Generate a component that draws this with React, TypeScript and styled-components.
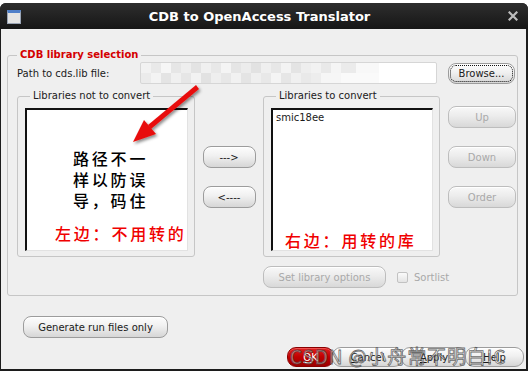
import styled, { createGlobalStyle } from "styled-components";

const GlobalStyle = createGlobalStyle`
  html, body {
    margin: 0;
    padding: 0;
    background: #ffffff;
  }
  body {
    font-family: "DejaVu Sans", "Noto Sans", sans-serif;
    font-size: 10px;
    color: #1a1a1a;
  }
`;

const Screen = styled.div`
  position: relative;
  width: 531px;
  height: 372px;
  overflow: hidden;
  padding-top: 3px;
  box-sizing: border-box;
`;

const Window = styled.div`
  width: 528px;
  height: 368px;
  display: flex;
  flex-direction: column;
  background: #1c1c1c;
  border-radius: 6px 6px 0 0;
  padding: 0 2px 2px 1px;
  box-sizing: border-box;
`;

const TitleBar = styled.div`
  height: 26px;
  display: flex;
  align-items: center;
  padding: 0 10px 0 7px;
  background: linear-gradient(#2e2e2e, #161616);
  border-radius: 6px 6px 0 0;
  margin: 0 -2px 0 -1px;
`;

const WinIcon = styled.div`
  width: 12px;
  height: 10px;
  border: 1px solid #9aa4b4;
  border-top: 3px solid #4f7fc9;
  background: #e4e4e4;
  margin-top: 2px;
`;

const Title = styled.div`
  flex: 1;
  text-align: center;
  color: #ffffff;
  font-family: "DejaVu Sans", sans-serif;
  font-weight: bold;
  font-size: 13px;
  padding-right: 10px;
`;

const Body = styled.div`
  flex: 1;
  background: #efefef;
  display: flex;
  flex-direction: column;
  padding: 20px 8px 0 6px;
  position: relative;
`;

const Group = styled.fieldset`
  margin: 0;
  padding: 0 0 7px 9px;
  border: 1px solid #c6c6c6;
  border-radius: 3px;
  min-inline-size: 0;
`;

const Legend = styled.legend<{ $accent?: boolean }>`
  padding: 0 3px;
  margin-left: ${(p) => (p.$accent ? "0" : "5px")};
  font-size: 10px;
  line-height: 12px;
  font-weight: ${(p) => (p.$accent ? "bold" : "normal")};
  color: ${(p) => (p.$accent ? "#d40000" : "#202020")};
`;

const PathRow = styled.div`
  display: flex;
  align-items: center;
  height: 22px;
  margin-top: 1px;
`;

const PathLabel = styled.span`
  width: 123px;
  flex-shrink: 0;
`;

const PathInput = styled.div`
  width: 297px;
  height: 22px;
  flex-shrink: 0;
  box-sizing: border-box;
  border: 1px solid #d6d6d6;
  border-radius: 2px;
  background-color: #ffffff;
  background-image:
    linear-gradient(90deg, #f2f2f2 0 10px, #e9e9e9 10px 20px, #f6f6f6 20px 30px, #e6e6e6 30px 40px, #eeeeee 40px 50px, #e3e3e3 50px 60px, #f0f0f0 60px 70px, #e8e8e8 70px 80px, #f4f4f4 80px 90px, #e5e5e5 90px 100px, #ececec 100px 110px, #e2e2e2 110px 120px, #efefef 120px 130px, #e7e7e7 130px 140px, #f3f3f3 140px 150px, #e4e4e4 150px 160px, #eeeeee 160px 170px, #f2f2f2 170px 180px, #e9e9e9 180px 190px, #f5f5f5 190px 200px, #ebebeb 200px 215px, #f8f8f8 215px 238px, transparent 238px),
    linear-gradient(90deg, #ebebeb 0 10px, #f3f3f3 10px 20px, #e4e4e4 20px 30px, #f0f0f0 30px 40px, #e6e6e6 40px 50px, #f2f2f2 50px 60px, #e2e2e2 60px 70px, #eeeeee 70px 80px, #e7e7e7 80px 90px, #f1f1f1 90px 100px, #e4e4e4 100px 110px, #efefef 110px 120px, #e8e8e8 120px 130px, #f4f4f4 130px 140px, #e6e6e6 140px 150px, #f0f0f0 150px 160px, #e9e9e9 160px 170px, #ededed 170px 180px, #f6f6f6 180px 200px, #fafafa 200px 238px, transparent 238px);
  background-size: 100% 50%, 100% 50%;
  background-position: 0 0, 0 100%;
  background-repeat: no-repeat;
`;

const Button = styled.button<{ $w: number; $h?: number; $focus?: boolean }>`
  width: ${(p) => p.$w}px;
  height: ${(p) => p.$h ?? 22}px;
  flex-shrink: 0;
  padding: 0;
  box-sizing: border-box;
  font-family: "DejaVu Sans", sans-serif;
  font-size: 10px;
  color: #1a1a1a;
  border: 1px solid #9c9c9c;
  border-radius: 8px;
  background: linear-gradient(#fdfdfd, #f0f0f0 45%, #d6d6d6);
  box-shadow: inset 0 1px 0 #ffffff;
  outline: ${(p) => (p.$focus ? "1px dotted #111" : "none")};
  outline-offset: -3px;
  &:disabled {
    color: #a9a9a9;
    border-color: #bdbdbd;
    background: linear-gradient(#f8f8f8, #ececec 45%, #d8d8d8);
  }
`;

const BrowseButton = styled(Button)`
  margin-left: 11px;
`;

const MainRow = styled.div`
  display: flex;
  align-items: flex-start;
  margin-top: 6px;
`;

const ListGroup = styled.fieldset<{ $w: number }>`
  width: ${(p) => p.$w}px;
  flex-shrink: 0;
  box-sizing: border-box;
  margin: 0;
  padding: 6px 6px 5px 7px;
  border: 1px solid #c6c6c6;
  border-radius: 3px;
  min-inline-size: 0;
`;

const ListBox = styled.div<{ $align: "center" | "start" }>`
  height: 143px;
  box-sizing: border-box;
  background: #ffffff;
  border-top: 2px solid #111;
  border-left: 2px solid #111;
  border-right: 1px solid #e2e2e2;
  border-bottom: 1px solid #e2e2e2;
  display: flex;
  flex-direction: column;
  padding: ${(p) => (p.$align === "center" ? "38px 0 0 28px" : "2px 0 0 3px")};
`;

const ListItem = styled.div`
  font-size: 10px;
  line-height: 12px;
`;

const NoteLines = styled.div`
  padding-left: 18px;
  font-family: "Noto Sans CJK SC", sans-serif;
  font-weight: 500;
  font-size: 16px;
  line-height: 21px;
  letter-spacing: 2.8px;
  color: #000;
`;

const RedNote = styled.div<{ $top: number; $indent?: number }>`
  margin-top: ${(p) => p.$top}px;
  padding-left: ${(p) => p.$indent ?? 0}px;
  font-family: "Noto Sans CJK SC", sans-serif;
  font-weight: 500;
  font-size: 16px;
  line-height: 18px;
  letter-spacing: 2.8px;
  color: #f00000;
  white-space: nowrap;
`;

const MoveColumn = styled.div`
  width: 68px;
  flex-shrink: 0;
  display: flex;
  flex-direction: column;
  align-items: center;
  gap: 18px;
  padding-top: 56px;
`;

const SideColumn = styled.div`
  display: flex;
  flex-direction: column;
  gap: 18px;
  margin-left: 8px;
  padding-top: 16px;
`;

const OptionRow = styled.div`
  display: flex;
  align-items: center;
  margin-top: 9px;
  margin-left: 246px;
`;

const CheckLabel = styled.label`
  display: flex;
  align-items: center;
  margin-left: 11px;
  color: #a9a9a9;
  gap: 6px;
`;

const CheckBox = styled.span`
  width: 11px;
  height: 11px;
  box-sizing: border-box;
  border: 1px solid #c2c2c2;
  border-radius: 2px;
  background: linear-gradient(#fafafa, #e4e4e4);
`;

const GenerateRow = styled.div`
  margin-top: 20px;
  padding-left: 16px;
`;

const FooterRow = styled.div`
  display: flex;
  justify-content: flex-end;
  margin-top: 9px;
  margin-right: -6px;
`;

const FooterButton = styled(Button)<{ $primary?: boolean }>`
  height: 20px;
  margin-left: -2px;
  border-radius: 9px;
  ${(p) =>
    p.$primary &&
    `
    color: #ffffff;
    border-color: #8a0000;
    background: linear-gradient(#e02020, #c00000 50%, #9c0000);
    box-shadow: inset 0 1px 0 #f05050;
  `}
  u {
    text-decoration: underline;
  }
`;

const Overlay = styled.svg`
  position: absolute;
  left: 0;
  top: 0;
  pointer-events: none;
`;

const Watermark = styled.div`
  position: absolute;
  left: 290px;
  top: 344px;
  font-family: "Noto Sans CJK SC", "DejaVu Sans", sans-serif;
  font-size: 19px;
  line-height: 24px;
  letter-spacing: 0.9px;
  color: rgba(255, 255, 255, 0.45);
  -webkit-text-stroke: 0.8px rgba(70, 70, 70, 0.8);
  white-space: nowrap;
  pointer-events: none;
`;

const CloseIcon = () => (
  <svg width="10" height="10" viewBox="0 0 10 10">
    <path d="M1.5 1.5 L8.5 8.5 M8.5 1.5 L1.5 8.5" stroke="#bdbdbd" strokeWidth="2.2" strokeLinecap="square" />
  </svg>
);

export default function App() {
  return (
    <>
      <GlobalStyle />
      <Screen>
        <Window>
          <TitleBar>
            <WinIcon />
            <Title>CDB to OpenAccess Translator</Title>
            <CloseIcon />
          </TitleBar>
          <Body>
            <Group>
              <Legend $accent>CDB library selection</Legend>
              <PathRow>
                <PathLabel>Path to cds.lib file:</PathLabel>
                <PathInput />
                <BrowseButton $w={67} $h={21} $focus>
                  Browse...
                </BrowseButton>
              </PathRow>
              <MainRow>
                <ListGroup $w={178}>
                  <Legend>Libraries not to convert</Legend>
                  <ListBox $align="center">
                    <NoteLines>
                      <div>路径不一</div>
                      <div>样以防误</div>
                      <div>导，码住</div>
                    </NoteLines>
                    <RedNote $top={13}>左边：不用转的</RedNote>
                  </ListBox>
                </ListGroup>
                <MoveColumn>
                  <Button $w={53}>---&gt;</Button>
                  <Button $w={53}>&lt;----</Button>
                </MoveColumn>
                <ListGroup $w={177}>
                  <Legend>Libraries to convert</Legend>
                  <ListBox $align="start">
                    <ListItem>smic18ee</ListItem>
                    <RedNote $top={107} $indent={9}>
                      右边：用转的库
                    </RedNote>
                  </ListBox>
                </ListGroup>
                <SideColumn>
                  <Button $w={68} disabled>
                    Up
                  </Button>
                  <Button $w={68} disabled>
                    Down
                  </Button>
                  <Button $w={68} disabled>
                    Order
                  </Button>
                </SideColumn>
              </MainRow>
              <OptionRow>
                <Button $w={123} disabled>
                  Set library options
                </Button>
                <CheckLabel>
                  <CheckBox />
                  Sortlist
                </CheckLabel>
              </OptionRow>
            </Group>
            <GenerateRow>
              <Button $w={145}>Generate run files only</Button>
            </GenerateRow>
            <FooterRow>
              <FooterButton $w={47} $primary>
                <u>O</u>K
              </FooterButton>
              <FooterButton $w={71}>
                <u>C</u>ancel
              </FooterButton>
              <FooterButton $w={66}>
                <u>A</u>pply
              </FooterButton>
              <FooterButton $w={59}>
                <u>H</u>elp
              </FooterButton>
            </FooterRow>
          </Body>
        </Window>
        <Overlay width="531" height="372" viewBox="0 0 531 372">
          <defs>
            <filter id="arrowShadow" x="-20%" y="-20%" width="140%" height="140%">
              <feDropShadow dx="1.5" dy="2" stdDeviation="1.5" floodColor="#000" floodOpacity="0.45" />
            </filter>
          </defs>
          <g filter="url(#arrowShadow)" fill="#e8100c">
            <path d="M196 85 L199 89 L151 129 L148 125 Z" />
            <path d="M133 142 L144 120 L156 134 Z" />
          </g>
        </Overlay>
        <Watermark>CSDN @小舟常不明白IC</Watermark>
      </Screen>
    </>
  );
}
